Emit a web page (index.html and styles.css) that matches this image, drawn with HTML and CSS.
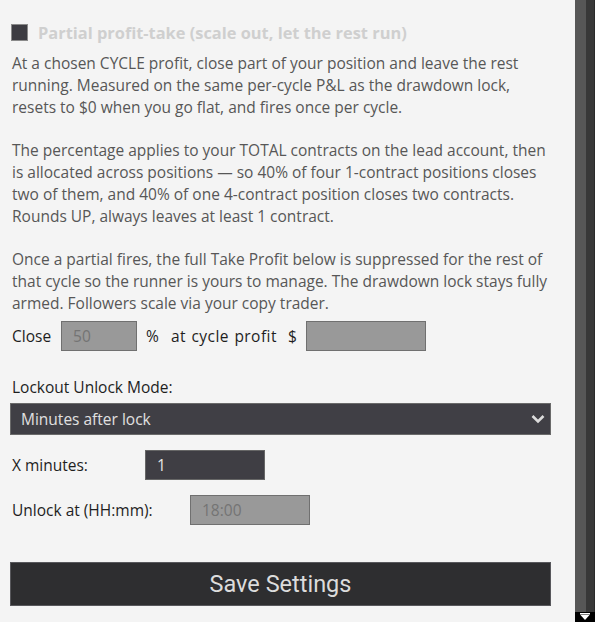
FILE: index.html
```html
<!DOCTYPE html>
<html lang="en">
<head>
<meta charset="utf-8">
<title>Settings</title>
<link rel="stylesheet" href="styles.css">
</head>
<body>
<div class="app">
  <main class="panel">
    <label class="title">
      <span class="check"></span>
      <span>Partial profit-take (scale out, let the rest run)</span>
    </label>
    <p class="desc first">At a chosen CYCLE profit, close part of your position and leave the rest running. Measured on the same per-cycle P&amp;L as the drawdown lock, resets to $0 when you go flat, and fires once per cycle.</p>
    <p class="desc">The percentage applies to your TOTAL contracts on the lead account, then is allocated across positions — so 40% of four 1-contract positions closes two of them, and 40% of one 4-contract position closes two contracts. Rounds UP, always leaves at least 1 contract.</p>
    <p class="desc">Once a partial fires, the full Take Profit below is suppressed for the rest of that cycle so the runner is yours to manage. The drawdown lock stays fully armed. Followers scale via your copy trader.</p>

    <div class="close-row">
      <span class="lbl close-lbl">Close</span>
      <div class="input disabled pct">50</div>
      <span class="lbl pct-sign">%</span>
      <span class="lbl profit-lbl">at cycle profit</span>
      <span class="lbl dollar">$</span>
      <div class="input disabled amount"></div>
    </div>

    <div class="field-label">Lockout Unlock Mode:</div>
    <div class="select">
      <span>Minutes after lock</span>
      <svg class="chev" width="14" height="10" viewBox="0 0 14 10"><path d="M1.5 2 L7 7.5 L12.5 2" fill="none" stroke="#dcdcdc" stroke-width="2.6"/></svg>
    </div>

    <div class="field-row minutes-row">
      <span class="lbl w-x">X minutes:</span>
      <div class="input dark">1</div>
    </div>
    <div class="field-row unlock-row">
      <span class="lbl w-unlock">Unlock at (HH:mm):</span>
      <div class="input disabled">18:00</div>
    </div>

    <button class="save">Save Settings</button>
  </main>
  <div class="scrollbar">
    <div class="sb-track">
      <div class="sb-thumb"></div>
      <div class="sb-rail"></div>
    </div>
    <div class="sb-btn">
      <svg width="12" height="8" viewBox="0 0 12 8"><rect x="1" y="0" width="10" height="1.5" fill="#fff"/><path d="M1.5 2 L10.5 2 L6 7 Z" fill="#fff"/></svg>
    </div>
  </div>
</div>
</body>
</html>
```

FILE: styles.css
```css
html, body {
  margin: 0;
  padding: 0;
  height: 622px;
  overflow: hidden;
  background: #f4f4f4;
}

body {
  font-family: "Open Sans", "Noto Sans", sans-serif;
  font-size: 15.5px;
  color: #222;
}

.app {
  display: flex;
  height: 622px;
}

.panel {
  flex: 1;
  padding: 21px 24px 0 10px;
  display: flex;
  flex-direction: column;
  align-items: stretch;
}

.title {
  display: flex;
  align-items: center;
  gap: 10px;
  height: 22px;
  padding-left: 1px;
  font-size: 16.4px;
  font-weight: 700;
  color: #cfcfcf;
}

.check {
  width: 15px;
  height: 15px;
  background: #3d3c42;
  border: 1px solid #8a8a8a;
  flex: none;
}

.desc {
  margin: 21px 0 0;
  padding-left: 2px;
  line-height: 22px;
  color: #575757;
}

.desc.first {
  margin-top: 9px;
}

.close-row {
  display: flex;
  align-items: center;
  margin-top: 7px;
  padding-left: 2px;
}

.lbl {
  color: #1e1e1e;
  white-space: nowrap;
}

.close-lbl {
  margin-right: 10px;
}

.pct-sign {
  margin-left: 9px;
  margin-right: 12px;
}

.profit-lbl {
  letter-spacing: 0.45px;
  word-spacing: 1px;
  margin-right: 11px;
}

.dollar {
  margin-right: 9px;
}

.input {
  box-sizing: border-box;
  height: 30px;
  width: 120px;
  padding: 0 11px;
  display: flex;
  align-items: center;
  border: 1px solid #707070;
  font-size: 15.5px;
}

.input.disabled {
  background: #999999;
  color: #747474;
}

.input.dark {
  background: #3f3e44;
  border-color: #666;
  color: #e6e6e6;
}

.input.pct {
  width: 76px;
}

.field-label {
  margin-top: 25px;
  padding-left: 2px;
  line-height: 22px;
  color: #1e1e1e;
}

.select {
  box-sizing: border-box;
  margin-top: 5px;
  height: 32px;
  display: flex;
  align-items: center;
  justify-content: space-between;
  padding: 0 5px 0 10px;
  background: #403f45;
  border: 1px solid #6a6a6a;
  color: #e0e0e0;
}

.field-row {
  display: flex;
  align-items: center;
  padding-left: 2px;
}

.minutes-row {
  margin-top: 15px;
}

.unlock-row {
  margin-top: 15px;
}

.w-x {
  width: 133px;
}

.w-unlock {
  width: 178px;
}

.save {
  margin-top: 37px;
  height: 44px;
  background: #2e2e30;
  border: 1px solid #58585c;
  color: #dcdcdc;
  font-family: Roboto, "Open Sans", sans-serif;
  font-size: 23.5px;
  padding: 0;
}

.scrollbar {
  width: 20px;
  flex: none;
  display: flex;
  flex-direction: column;
  background: #2a2a2a;
}

.sb-track {
  flex: 1;
  display: flex;
}

.sb-thumb {
  width: 11px;
  background: #575757;
}

.sb-rail {
  width: 8px;
  background: #383838;
  border-right: 1px solid #2a2a2a;
}

.sb-btn {
  height: 10px;
  background: #000;
  display: flex;
  justify-content: center;
  align-items: flex-start;
  padding-top: 1px;
  box-sizing: border-box;
}
```
